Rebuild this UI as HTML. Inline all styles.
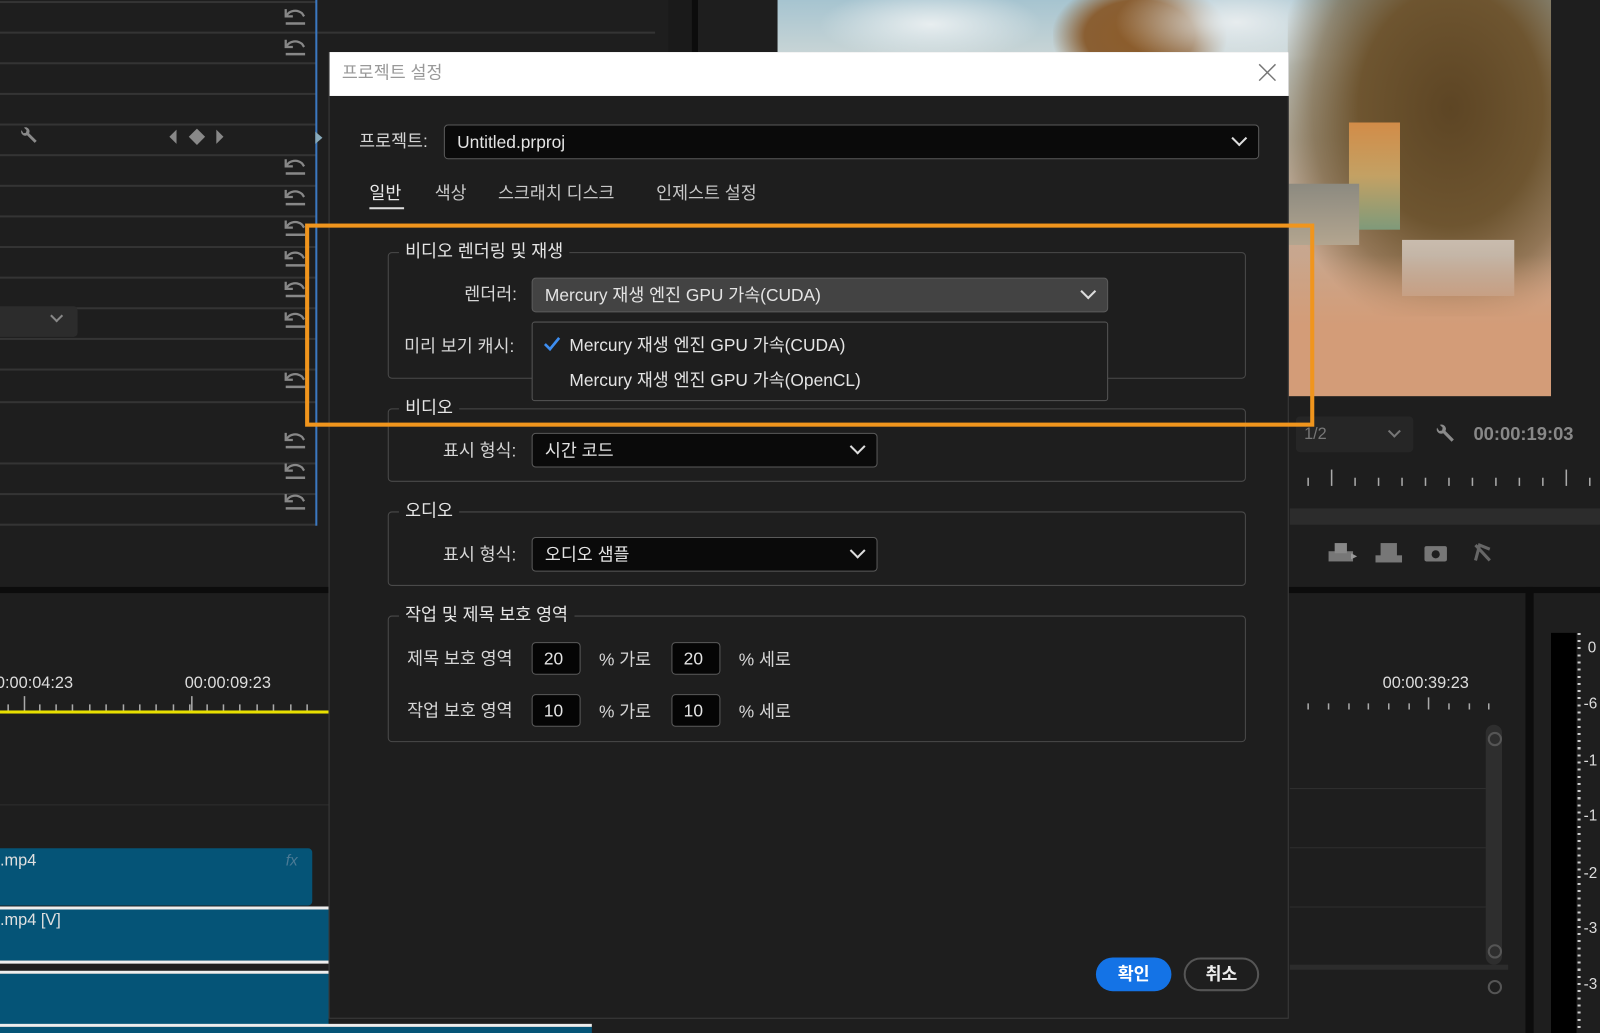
<!DOCTYPE html>
<html><head><meta charset="utf-8"><style>
html,body{margin:0;padding:0;background:#1e1e1e;overflow:hidden;width:1600px;height:1033px}
#s{position:absolute;left:0;top:0;width:1568px;height:1012px;transform:scale(1.0204,1.0208);transform-origin:0 0;background:#1e1e1e;font-family:"Liberation Sans","Noto Sans CJK KR",sans-serif;color:#d6d6d6;overflow:hidden}
.a{position:absolute}
.hl{position:absolute;height:2px;background:#343434}
.t{position:absolute;white-space:nowrap;font-size:17px;line-height:20px}
.box{position:absolute;border:1px solid #4a4a4a;border-radius:4px}
.leg{position:absolute;background:#1e1e1e;padding:0 6px;font-size:17px;line-height:20px;white-space:nowrap;color:#e6e6e6}
.dd{position:absolute;border:1px solid #5a5a5a;border-radius:4px;background:#0a0a0a;box-sizing:border-box}
.dd span{position:absolute;left:12px;top:7px;font-size:17px;line-height:20px;color:#e4e4e4;white-space:nowrap}
.chev{position:absolute;width:9px;height:9px;border-right:2.5px solid #ddd;border-bottom:2.5px solid #ddd;transform:rotate(45deg)}
.inp{position:absolute;width:48px;height:32px;box-sizing:border-box;border:1px solid #5a5a5a;border-radius:4px;background:#050505;color:#e4e4e4;font-size:17px;line-height:31px;padding-left:11px}
.undo{position:absolute;left:277px;width:24px;height:20px}
</style></head><body><div id="s">

<div class="hl" style="left:0;top:1px;width:310px"></div>
<div class="hl" style="left:0;top:31px;width:310px"></div>
<div class="hl" style="left:0;top:61px;width:310px"></div>
<div class="hl" style="left:0;top:91px;width:310px"></div>
<div class="hl" style="left:0;top:121px;width:310px"></div>
<div class="hl" style="left:0;top:151px;width:310px"></div>
<div class="hl" style="left:0;top:181px;width:310px"></div>
<div class="hl" style="left:0;top:211px;width:310px"></div>
<div class="hl" style="left:0;top:241px;width:310px"></div>
<div class="hl" style="left:0;top:271px;width:310px"></div>
<div class="hl" style="left:0;top:301px;width:310px"></div>
<div class="hl" style="left:0;top:331px;width:310px"></div>
<div class="hl" style="left:0;top:361px;width:310px"></div>
<div class="hl" style="left:0;top:393px;width:310px"></div>
<div class="hl" style="left:0;top:453px;width:310px"></div>
<div class="hl" style="left:0;top:483px;width:310px"></div>
<div class="hl" style="left:0;top:513px;width:310px"></div>
<div class="hl" style="left:310px;top:31px;width:332px"></div>
<div class="a" style="left:0;top:300px;width:76px;height:30px;background:#2c2c2c;border-radius:0 4px 4px 0"></div>
<div class="chev" style="left:51px;top:305px;width:7px;height:7px;border-color:#888;border-width:2px"></div>
<div class="a" style="left:309px;top:0;width:2px;height:515px;background:#3b78c0"></div>
<div class="a" style="left:655px;top:0;width:23px;height:575px;background:#1a1a1a"></div>
<div class="a" style="left:678px;top:0;width:6px;height:575px;background:#0c0c0c"></div>
<svg width="0" height="0" style="position:absolute"><defs>
<symbol id="u" viewBox="0 0 24 20"><path d="M3 3v7h7" fill="none" stroke="#888" stroke-width="2.2"/><path d="M4 9C7 4 14 3 19 7l2 3" fill="none" stroke="#888" stroke-width="2.2"/><path d="M3 17h19" stroke="#888" stroke-width="2.4"/></symbol>
<symbol id="w" viewBox="0 0 20 20"><path d="M3 4.5A4 4 0 0 0 8.5 9.5L16 17l2-2-7.5-7.5A4 4 0 0 0 5.5 2L8 4.5 7.5 7 5 7.5Z" fill="#8a8a8a"/></symbol>
</defs></svg>
<svg class="a" style="left:18px;top:123px" width="20" height="20"><use href="#w"/></svg>
<svg class="a" style="left:165px;top:126px" width="56" height="16"><polygon points="1,8 8,1 8,15" fill="#888"/><polygon points="20,8 28,0 36,8 28,16" fill="#888"/><polygon points="47,1 54,8 47,15" fill="#888"/></svg>
<svg class="a" style="left:307px;top:128px" width="10" height="14"><polygon points="2,1 9,7 2,13" fill="#8ab"/></svg>
<svg class="undo" style="top:6px"><use href="#u"/></svg>
<svg class="undo" style="top:36px"><use href="#u"/></svg>
<svg class="undo" style="top:153px"><use href="#u"/></svg>
<svg class="undo" style="top:183px"><use href="#u"/></svg>
<svg class="undo" style="top:213px"><use href="#u"/></svg>
<svg class="undo" style="top:243px"><use href="#u"/></svg>
<svg class="undo" style="top:273px"><use href="#u"/></svg>
<svg class="undo" style="top:303px"><use href="#u"/></svg>
<svg class="undo" style="top:362px"><use href="#u"/></svg>
<svg class="undo" style="top:421px"><use href="#u"/></svg>
<svg class="undo" style="top:451px"><use href="#u"/></svg>
<svg class="undo" style="top:481px"><use href="#u"/></svg>

<div class="a" style="left:0;top:575px;width:1568px;height:6px;background:#0c0c0c"></div>
<div class="a" style="left:1495px;top:575px;width:8px;height:437px;background:#0c0c0c"></div>

<div class="t" style="left:-4px;top:660px;font-size:16px;color:#ddd">0:00:04:23</div>
<div class="t" style="left:181px;top:660px;font-size:16px;color:#ddd">00:00:09:23</div>
<svg class="a" style="left:0;top:680px" width="322" height="18"><g stroke="#aaa" stroke-width="1.5">
<line x1="8" y1="10" x2="8" y2="16"/><line x1="24" y1="2" x2="24" y2="16"/><line x1="39" y1="10" x2="39" y2="16"/><line x1="55" y1="10" x2="55" y2="16"/><line x1="71" y1="10" x2="71" y2="16"/><line x1="88" y1="10" x2="88" y2="16"/><line x1="104" y1="10" x2="104" y2="16"/><line x1="121" y1="10" x2="121" y2="16"/><line x1="137" y1="10" x2="137" y2="16"/><line x1="153" y1="10" x2="153" y2="16"/><line x1="170" y1="10" x2="170" y2="16"/><line x1="186" y1="10" x2="186" y2="16"/><line x1="203" y1="10" x2="203" y2="16"/><line x1="219" y1="10" x2="219" y2="16"/><line x1="235" y1="10" x2="235" y2="16"/><line x1="252" y1="10" x2="252" y2="16"/><line x1="268" y1="10" x2="268" y2="16"/><line x1="285" y1="10" x2="285" y2="16"/><line x1="301" y1="10" x2="301" y2="16"/><line x1="188" y1="2" x2="188" y2="16"/></g></svg>
<div class="a" style="left:0;top:696px;width:322px;height:3px;background:#e8e000"></div>
<div class="a" style="left:0;top:788px;width:322px;height:1px;background:#2e2e2e"></div>
<div class="a" style="left:0;top:831px;width:306px;height:56px;background:#055477;border-radius:0 4px 4px 0"></div>
<div class="t" style="left:0;top:834px;font-size:16px;color:#e0e0e0">.mp4</div>
<div class="t" style="left:280px;top:834px;font-size:15px;color:#4a7a95;font-style:italic">fx</div>
<div class="a" style="left:0;top:888px;width:322px;height:3px;background:#eee"></div>
<div class="a" style="left:0;top:891px;width:322px;height:50px;background:#055477"></div>
<div class="t" style="left:0;top:892px;font-size:16px;color:#e0e0e0">.mp4 [V]</div>
<div class="a" style="left:0;top:941px;width:322px;height:3px;background:#eee"></div>
<div class="a" style="left:0;top:951px;width:322px;height:3px;background:#eee"></div>
<div class="a" style="left:0;top:954px;width:322px;height:50px;background:#055477"></div>
<div class="a" style="left:0;top:1003px;width:580px;height:3px;background:#eee"></div>
<div class="a" style="left:0;top:1006px;width:580px;height:6px;background:#055477"></div>

<!-- video image -->
<div class="a" style="left:762px;top:0;width:758px;height:388px;overflow:hidden;background:linear-gradient(180deg,#a6c4d0 0%,#c9d5d6 14%,#b8b3a6 35%,#c7a790 60%,#d0a27f 100%)">
  <div class="a" style="left:40px;top:0;width:220px;height:60px;background:radial-gradient(ellipse at 50% 40%,#e8eef0 0%,rgba(230,238,240,0) 70%)"></div>
  <div class="a" style="left:270px;top:-20px;width:170px;height:110px;background:radial-gradient(ellipse at 50% 50%,#8c5c2a 0%,#8a5f33 45%,rgba(138,95,51,0) 72%)"></div>
  <div class="a" style="left:330px;top:-10px;width:240px;height:80px;background:radial-gradient(ellipse at 50% 40%,#e7ecee 0%,rgba(231,236,238,0) 70%)"></div>
  <div class="a" style="left:500px;top:-30px;width:290px;height:340px;background:radial-gradient(ellipse at 55% 40%,#5d4524 0%,#6e5530 40%,rgba(110,85,48,.6) 60%,rgba(110,85,48,0) 78%)"></div>
  <div class="a" style="left:560px;top:120px;width:50px;height:105px;background:linear-gradient(180deg,#d28c48,#c3a164 50%,#7f9a7a)"></div>
  <div class="a" style="left:500px;top:180px;width:70px;height:60px;background:linear-gradient(180deg,#8c8a80,#b3a58f)"></div>
  <div class="a" style="left:612px;top:235px;width:110px;height:55px;background:linear-gradient(180deg,#c9bcae,#b8a594)"></div>
  <div class="a" style="left:500px;top:250px;width:258px;height:140px;background:linear-gradient(180deg,rgba(210,160,120,0),#d39c78 50%)"></div>
</div>
<div class="a" style="left:1270px;top:408px;width:115px;height:35px;background:#262626;border-radius:4px"></div>
<div class="t" style="left:1278px;top:416px;color:#777;font-size:16px">1/2</div>
<div class="chev" style="left:1362px;top:418px;width:7px;height:7px;border-color:#777;border-width:2px"></div>
<svg class="a" style="left:1405px;top:414px" width="22" height="22"><use href="#w"/></svg>
<div class="t" style="left:1444px;top:415px;color:#888;font-size:18px;font-weight:bold">00:00:19:03</div>
<svg class="a" style="left:1275px;top:458px" width="293" height="22"><g stroke="#aaa" stroke-width="1.5"><line x1="7" y1="10" x2="7" y2="18"/><line x1="30" y1="2" x2="30" y2="18"/><line x1="53" y1="10" x2="53" y2="18"/><line x1="76" y1="10" x2="76" y2="18"/><line x1="99" y1="10" x2="99" y2="18"/><line x1="122" y1="10" x2="122" y2="18"/><line x1="145" y1="10" x2="145" y2="18"/><line x1="168" y1="10" x2="168" y2="18"/><line x1="191" y1="10" x2="191" y2="18"/><line x1="214" y1="10" x2="214" y2="18"/><line x1="237" y1="10" x2="237" y2="18"/><line x1="260" y1="2" x2="260" y2="18"/><line x1="283" y1="10" x2="283" y2="18"/></g></svg>
<div class="a" style="left:1264px;top:498px;width:304px;height:16px;background:#2c2c2c"></div>
<svg class="a" style="left:1300px;top:530px" width="170" height="22"><g fill="#777"><rect x="2" y="10" width="24" height="10"/><rect x="8" y="2" width="12" height="10" fill="#888"/><polygon points="24,12 30,15 24,18" fill="#999"/><rect x="48" y="14" width="26" height="7"/><rect x="53" y="2" width="16" height="13"/><rect x="96" y="5" width="22" height="15" rx="2"/><circle cx="107" cy="13" r="4" fill="#1e1e1e"/><path d="M146 4l14 15M146 19l4-15 10 4" stroke="#666" stroke-width="3" fill="none"/></g></svg>
<div class="t" style="left:1355px;top:660px;font-size:16px;color:#ddd">00:00:39:23</div>
<svg class="a" style="left:1270px;top:683px" width="200" height="16"><g stroke="#aaa" stroke-width="1.5"><line x1="12" y1="6" x2="12" y2="12"/><line x1="32" y1="6" x2="32" y2="12"/><line x1="52" y1="6" x2="52" y2="12"/><line x1="71" y1="6" x2="71" y2="12"/><line x1="91" y1="6" x2="91" y2="12"/><line x1="111" y1="6" x2="111" y2="12"/><line x1="130" y1="0" x2="130" y2="12"/><line x1="150" y1="6" x2="150" y2="12"/><line x1="170" y1="6" x2="170" y2="12"/><line x1="189" y1="6" x2="189" y2="12"/></g></svg>
<div class="a" style="left:1456px;top:710px;width:16px;height:235px;background:#2e2e2e;border-radius:8px"></div>
<div class="a" style="left:1458px;top:717px;width:10px;height:10px;border:2px solid #555;border-radius:50%"></div>
<div class="a" style="left:1458px;top:925px;width:10px;height:10px;border:2px solid #555;border-radius:50%"></div>
<div class="a" style="left:1458px;top:960px;width:10px;height:10px;border:2px solid #555;border-radius:50%"></div>
<div class="a" style="left:1264px;top:772px;width:192px;height:1px;background:#2f2f2f"></div>
<div class="a" style="left:1264px;top:830px;width:192px;height:1px;background:#2f2f2f"></div>
<div class="a" style="left:1264px;top:888px;width:192px;height:1px;background:#2f2f2f"></div>
<div class="a" style="left:1264px;top:945px;width:214px;height:5px;background:#2c2c2c"></div>
<div class="a" style="left:1520px;top:620px;width:25px;height:392px;background:#000"></div>
<div class="a" style="left:1546px;top:620px;width:3px;height:392px;background:repeating-linear-gradient(180deg,#ccc 0 2px,transparent 2px 7px)"></div>
<div class="t" style="left:1556px;top:625px;font-size:15px;color:#ddd">0</div>
<div class="t" style="left:1552px;top:680px;font-size:15px;color:#ddd">-6</div>
<div class="t" style="left:1552px;top:736px;font-size:15px;color:#ddd">-1</div>
<div class="t" style="left:1552px;top:790px;font-size:15px;color:#ddd">-1</div>
<div class="t" style="left:1552px;top:846px;font-size:15px;color:#ddd">-2</div>
<div class="t" style="left:1552px;top:900px;font-size:15px;color:#ddd">-3</div>
<div class="t" style="left:1552px;top:955px;font-size:15px;color:#ddd">-3</div>

<!-- DIALOG -->
<div class="a" style="left:322px;top:51px;width:941px;height:947px;background:#1e1e1e;border:1px solid #3c3c3c;box-sizing:border-box"></div>
<div class="a" style="left:323px;top:51px;width:940px;height:43px;background:#fff"></div>
<div class="t" style="left:335px;top:62px;color:#999;font-size:17px">프로젝트 설정</div>
<svg class="a" style="left:1233px;top:62px" width="18" height="18"><path d="M1 1L17 17M17 1L1 17" stroke="#777" stroke-width="1.4"/></svg>

<div class="t" style="left:352px;top:129px">프로젝트:</div>
<div class="dd" style="left:435px;top:122px;width:799px;height:34px"><span>Untitled.prproj</span></div>
<div class="chev" style="left:1209px;top:130px"></div>

<div class="t" style="left:362px;top:180px;color:#e8e8e8">일반</div>
<div class="a" style="left:362px;top:203px;width:34px;height:2px;background:#ddd"></div>
<div class="t" style="left:426px;top:180px;color:#c8c8c8">색상</div>
<div class="t" style="left:488px;top:180px;color:#c8c8c8">스크래치 디스크</div>
<div class="t" style="left:643px;top:180px;color:#c8c8c8">인제스트 설정</div>

<div class="box" style="left:380px;top:247px;width:839px;height:122px"></div>
<div class="leg" style="left:391px;top:237px">비디오 렌더링 및 재생</div>
<div class="t" style="left:455px;top:279px">렌더러:</div>
<div class="dd" style="left:521px;top:272px;width:565px;height:34px;background:#434343;border-color:#5c5c5c"><span>Mercury 재생 엔진 GPU 가속(CUDA)</span></div>
<div class="chev" style="left:1061px;top:280px"></div>
<div class="t" style="left:396px;top:330px">미리 보기 캐시:</div>
<div class="a" style="left:521px;top:315px;width:565px;height:78px;background:#1e1e1e;border:1px solid #555;border-radius:3px;box-sizing:border-box"></div>
<svg class="a" style="left:532px;top:329px" width="18" height="16"><path d="M2 8L7 13L16 2" fill="none" stroke="#3d8df0" stroke-width="2.6"/></svg>
<div class="t" style="left:558px;top:329px;color:#e4e4e4">Mercury 재생 엔진 GPU 가속(CUDA)</div>
<div class="t" style="left:558px;top:363px;color:#e4e4e4">Mercury 재생 엔진 GPU 가속(OpenCL)</div>

<div class="box" style="left:380px;top:400px;width:839px;height:70px"></div>
<div class="leg" style="left:391px;top:390px">비디오</div>
<div class="t" style="left:434px;top:432px">표시 형식:</div>
<div class="dd" style="left:521px;top:424px;width:339px;height:34px"><span>시간 코드</span></div>
<div class="chev" style="left:835px;top:432px"></div>

<div class="box" style="left:380px;top:501px;width:839px;height:71px"></div>
<div class="leg" style="left:391px;top:491px">오디오</div>
<div class="t" style="left:434px;top:534px">표시 형식:</div>
<div class="dd" style="left:521px;top:526px;width:339px;height:34px"><span>오디오 샘플</span></div>
<div class="chev" style="left:835px;top:534px"></div>

<div class="box" style="left:380px;top:603px;width:839px;height:122px"></div>
<div class="leg" style="left:391px;top:593px">작업 및 제목 보호 영역</div>
<div class="t" style="left:399px;top:636px">제목 보호 영역</div>
<div class="inp" style="left:521px;top:629px">20</div>
<div class="t" style="left:587px;top:637px">% 가로</div>
<div class="inp" style="left:658px;top:629px">20</div>
<div class="t" style="left:724px;top:637px">% 세로</div>
<div class="t" style="left:399px;top:687px">작업 보호 영역</div>
<div class="inp" style="left:521px;top:680px">10</div>
<div class="t" style="left:587px;top:688px">% 가로</div>
<div class="inp" style="left:658px;top:680px">10</div>
<div class="t" style="left:724px;top:688px">% 세로</div>

<div class="a" style="left:1074px;top:938px;width:74px;height:33px;background:#1473e6;border-radius:17px;color:#fff;font-size:17px;font-weight:bold;text-align:center;line-height:33px">확인</div>
<div class="a" style="left:1160px;top:938px;width:74px;height:33px;box-sizing:border-box;border:2px solid #555;border-radius:17px;color:#eee;font-size:17px;font-weight:bold;text-align:center;line-height:29px">취소</div>

<div class="a" style="left:299px;top:219px;width:989px;height:199px;border:4px solid #f0951d;box-sizing:border-box"></div>
</div></body></html>
